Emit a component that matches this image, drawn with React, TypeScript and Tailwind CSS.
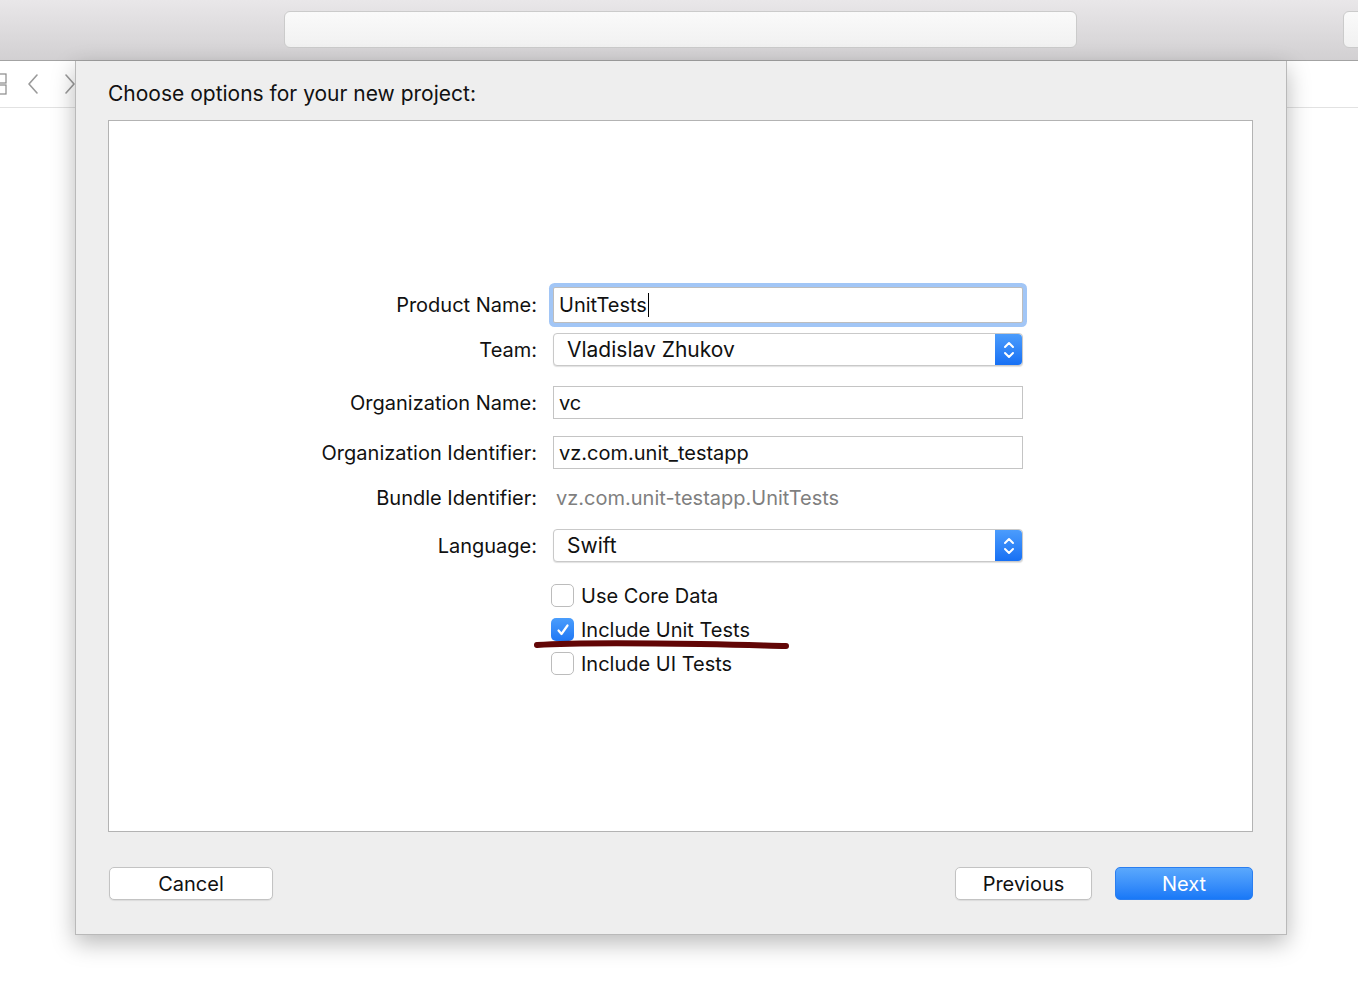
import React from "react";

const font = { fontFamily: "Inter, 'Liberation Sans', sans-serif" };

function Stepper() {
  return (
    <div className="w-[27px] h-full rounded-r-[4px] bg-gradient-to-b from-[#4b9cfc] to-[#1670f4] flex items-center justify-center">
      <svg width="14" height="22" viewBox="0 0 14 22" fill="none" stroke="white" strokeWidth="2" strokeLinecap="round" strokeLinejoin="round">
        <path d="M3 8 L7 4 L11 8" />
        <path d="M3 14 L7 18 L11 14" />
      </svg>
    </div>
  );
}

function Popup({ value }: { value: string }) {
  return (
    <div className="w-[470px] h-[33px] flex bg-white rounded-[4px] border border-[#c9c9c9] shadow-[0_1px_1px_rgba(0,0,0,0.12)]">
      <div className="flex-1 pl-[13px] flex items-center text-[21px] text-[#111]">{value}</div>
      <Stepper />
    </div>
  );
}

function Field({ value }: { value: string }) {
  return (
    <div className="w-[470px] h-[33px] bg-white border border-[#c4c4c4] flex items-center pl-[5px] text-[20px] text-[#111]">
      {value}
    </div>
  );
}

function Check({ checked, label }: { checked?: boolean; label: string }) {
  return (
    <div className="flex items-center gap-[7px] h-[23px]">
      {checked ? (
        <div className="w-[23px] h-[23px] rounded-[5px] bg-gradient-to-b from-[#4a9dfc] to-[#1f78f5] flex items-center justify-center">
          <svg width="16" height="16" viewBox="0 0 16 16" fill="none" stroke="white" strokeWidth="2.2" strokeLinecap="round" strokeLinejoin="round">
            <path d="M3.5 8.5 L6.5 12 L12.5 3.5" />
          </svg>
        </div>
      ) : (
        <div className="w-[23px] h-[23px] rounded-[5px] bg-white border border-[#bcbcbc]" />
      )}
      <span className="text-[20px] text-[#111]">{label}</span>
    </div>
  );
}

function Row({ label, h, mt, children }: { label: string; h: string; mt: string; children: React.ReactNode }) {
  return (
    <div className={`flex items-center ${h} ${mt}`}>
      <div className="w-[428px] text-right text-[20px] text-[#111]">{label}</div>
      <div className="ml-[16px]">{children}</div>
    </div>
  );
}

export default function App() {
  return (
    <div className="relative w-full h-[986px] bg-white overflow-hidden" style={font}>
      {/* toolbar */}
      <div className="h-[61px] bg-gradient-to-b from-[#e9e7e9] to-[#d2d0d2] border-b border-[#a3a3a3] flex pt-[11px] pl-[284px] gap-[266px]">
        <div className="w-[793px] shrink-0 h-[37px] rounded-[6px] bg-gradient-to-b from-[#fafafa] to-[#f1f1f1] border border-[#cbcbcb]" />
        <div className="w-[40px] shrink-0 h-[37px] rounded-l-[6px] bg-gradient-to-b from-[#fafafa] to-[#f1f1f1] border border-[#cbcbcb]" />
      </div>

      <div className="flex">
        {/* left strip */}
        <div className="w-[75px] shrink-0">
          <div className="h-[47px] border-b border-[#e2e2e2] flex items-center">
            <svg width="7" height="24" viewBox="0 0 7 24" fill="none" stroke="#8a8a8a" strokeWidth="1.2">
              <rect x="-4" y="2" width="10" height="9" />
              <rect x="-4" y="13" width="10" height="9" />
            </svg>
            <svg className="ml-[19px]" width="14" height="22" viewBox="0 0 14 22" fill="none" stroke="#9a9a9a" strokeWidth="1.6" strokeLinecap="round" strokeLinejoin="round">
              <path d="M11 2 L3 11 L11 20" />
            </svg>
            <svg className="ml-[24px]" width="11" height="22" viewBox="0 0 11 22" fill="none" stroke="#9a9a9a" strokeWidth="1.6" strokeLinecap="round" strokeLinejoin="round">
              <path d="M2 2 L10 11 L2 20" />
            </svg>
          </div>
        </div>

        {/* dialog */}
        <div className="w-[1212px] h-[874px] shrink-0 bg-[#eeeeee] border-x border-b border-[#b9b9b9] shadow-[0_8px_22px_rgba(0,0,0,0.28)] pl-[32px] pr-[33px] relative z-10">
          <div className="pt-[19px] h-[46px] text-[21px] leading-[28px] text-[#111]">Choose options for your new project:</div>
          <div className="mt-[13px] w-[1145px] h-[712px] bg-white border border-[#b3b3b3] pt-[162px]">
            <Row label="Product Name:" h="h-[44px]" mt="mt-0">
              <div className="w-[470px] h-[36px] bg-white border border-[#bdbdbd] rounded-[2px] shadow-[0_0_0_4px_#a2c6f6] flex items-center pl-[5px] text-[20px] text-[#111]">
                UnitTests
                <span className="inline-block w-[1px] h-[24px] bg-black ml-[1px]" />
              </div>
            </Row>
            <Row label="Team:" h="h-[33px]" mt="mt-[6px]">
              <Popup value="Vladislav Zhukov" />
            </Row>
            <Row label="Organization Name:" h="h-[33px]" mt="mt-[20px]">
              <Field value="vc" />
            </Row>
            <Row label="Organization Identifier:" h="h-[33px]" mt="mt-[17px]">
              <Field value="vz.com.unit_testapp" />
            </Row>
            <Row label="Bundle Identifier:" h="h-[24px]" mt="mt-[17px]">
              <div className="pl-[3px] text-[20px] text-[#7f7f7f]">vz.com.unit-testapp.UnitTests</div>
            </Row>
            <Row label="Language:" h="h-[33px]" mt="mt-[19px]">
              <Popup value="Swift" />
            </Row>
            <div className="ml-[442px] mt-[22px] flex flex-col gap-[11px]">
              <Check label="Use Core Data" />
              <Check checked label="Include Unit Tests" />
              <Check label="Include UI Tests" />
            </div>
          </div>

          <div className="mt-[35px] pl-[1px] flex items-center">
            <button className="w-[164px] h-[33px] bg-white border border-[#c3c3c3] rounded-[5px] text-[20px] text-[#111] shadow-[0_1px_1px_rgba(0,0,0,0.08)]">Cancel</button>
            <button className="ml-auto w-[137px] h-[33px] bg-white border border-[#c3c3c3] rounded-[5px] text-[20px] text-[#111] shadow-[0_1px_1px_rgba(0,0,0,0.08)]">Previous</button>
            <button className="ml-[23px] w-[138px] h-[33px] rounded-[5px] bg-gradient-to-b from-[#5aa8fd] to-[#1878f7] border border-[#2a7ef0] text-[20px] text-white">Next</button>
          </div>
        </div>

        {/* right strip */}
        <div className="flex-1">
          <div className="h-[47px] border-b border-[#e2e2e2]" />
        </div>
      </div>

      {/* hand-drawn underline */}
      <svg className="absolute left-0 top-0 z-20 pointer-events-none" width="1358" height="986">
        <path d="M537 645 C 580 642, 640 643, 700 644 S 770 646, 786 646" fill="none" stroke="#620606" strokeWidth="6" strokeLinecap="round" />
      </svg>
    </div>
  );
}
